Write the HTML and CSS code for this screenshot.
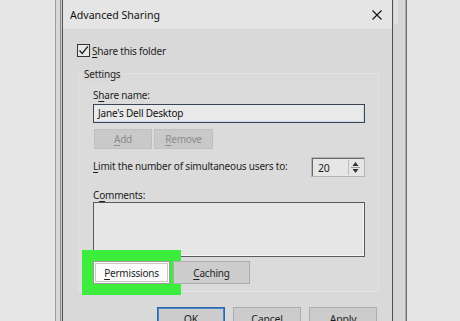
FILE: index.html
```
<!DOCTYPE html>
<html>
<head>
<meta charset="utf-8">
<link rel="stylesheet" href="styles.css">
</head>
<body>
<div class="screen">
  <div class="desk-left"></div>
  <div class="frame-left"></div>
  <div class="dialog">
    <div class="titlebar">
      <span class="title">Advanced Sharing</span>
      <svg class="close" width="10" height="10" viewBox="0 0 10 10"><path d="M0.5 0.5 L9.5 9.5 M9.5 0.5 L0.5 9.5" stroke="#111" stroke-width="1.1" fill="none"/></svg>
    </div>
    <div class="body">
      <div class="check-row">
        <span class="checkbox"><svg width="11" height="11" viewBox="0 0 11 11"><path d="M1.5 5.5 L4.2 8.5 L9.8 1.5" stroke="#222" stroke-width="1.3" fill="none"/></svg></span>
        <span class="label"><u>S</u>hare this folder</span>
      </div>
      <div class="group">
        <div class="group-title">Settings</div>
        <div class="label share-label">S<u>h</u>are name:</div>
        <div class="textbox name-box">Jane's Dell Desktop</div>
        <div class="btn-row">
          <span class="btn disabled add"><u>A</u>dd</span>
          <span class="btn disabled remove"><u>R</u>emove</span>
        </div>
        <div class="limit-row">
          <span class="label"><u>L</u>imit the number of simultaneous users to:</span>
          <span class="spinner">
            <span class="spin-value">20</span>
            <span class="spin-arrows">
              <svg width="11" height="15" viewBox="0 0 11 15"><path d="M5.5 2 L8.5 6 L2.5 6 Z" fill="#333"/><path d="M1 7.5 H10" stroke="#9a9a9a" stroke-width="1"/><path d="M2.5 9 L8.5 9 L5.5 13 Z" fill="#333"/></svg>
            </span>
          </span>
        </div>
        <div class="label comments-label">C<u>o</u>mments:</div>
        <div class="textbox comments-box"></div>
        <div class="btn-row perm-row">
          <span class="btn permissions"><u>P</u>ermissions</span>
          <span class="btn caching"><u>C</u>aching</span>
        </div>
      </div>
      <div class="footer">
        <span class="btn ok">OK</span>
        <span class="btn cancel">Cancel</span>
        <span class="btn apply">Apply</span>
      </div>
    </div>
  </div>
  <div class="frame-right">
    <div class="thumb"></div>
  </div>
  <div class="desk-right"></div>
</div>
</body>
</html>
```
FILE: styles.css
```
html, body {
  margin: 0;
  padding: 0;
  background: #e5e5e5;
  overflow: hidden;
}
.screen {
  display: flex;
  width: 460px;
  height: 321px;
  overflow: hidden;
  font-family: "Noto Sans", "DejaVu Sans", sans-serif;
  font-size: 10px;
  letter-spacing: -0.2px;
  color: #1e1e1e;
}
.desk-left {
  width: 55px;
  flex: none;
  background: #e6e6e6;
  border-right: 1px solid #9c9c9c;
}
.frame-left {
  width: 4px;
  flex: none;
  background: #d8d8d8;
}
.dialog {
  flex: none;
  width: 329px;
  border-left: 1px solid #8a8a8a;
  border-right: 1px solid #4d4d4d;
  box-shadow: inset 1px 0 0 #cfcfcf, inset 2px 0 0 #505050;
  padding-left: 2px;
  background: #d9d9d9;
  display: flex;
  flex-direction: column;
}
.titlebar {
  height: 29px;
  background: #e5e5e5;
  display: flex;
  align-items: center;
  justify-content: space-between;
  padding: 0 10px 0 7px;
  flex: none;
}
.title {
  font-size: 10.6px;
  letter-spacing: 0;
  color: #111;
  margin-top: 1px;
}
.close {
  display: block;
}
.body {
  padding: 15px 15px 0 14px;
  display: flex;
  flex-direction: column;
}
.check-row {
  display: flex;
  align-items: center;
  gap: 2px;
  height: 13px;
}
.checkbox {
  width: 11px;
  height: 11px;
  border: 1px solid #333;
  background: #e8e8e8;
  display: flex;
  align-items: center;
  justify-content: center;
}
.checkbox svg {
  display: block;
}
.label {
  line-height: 16px;
  white-space: nowrap;
}
.label u, .btn u {
  text-decoration-thickness: 1px;
  text-underline-offset: 2px;
}
.group {
  margin-top: 16px;
  margin-left: 1px;
  width: 272px;
  border: 1px solid #e2e2e2;
  background: #dbdbdb;
  padding: 0 13px 7px 14px;
  display: flex;
  flex-direction: column;
  align-items: flex-start;
}
.group-title {
  line-height: 16px;
  margin-top: -8px;
  margin-left: -11px;
  padding: 0 2px;
  background: #d9d9d9;
}
.share-label {
  margin-top: 5px;
}
.textbox {
  box-sizing: border-box;
  width: 272px;
  background: #e9e9e9;
}
.name-box {
  margin-top: 1px;
  height: 19px;
  border: 1px solid #3a4656;
  box-shadow: inset -1px -1px 0 #c9d8ea;
  line-height: 17px;
  padding-left: 4px;
  color: #111;
}
.btn-row {
  display: flex;
  gap: 2px;
  margin-top: 6px;
}
.btn {
  box-sizing: border-box;
  display: flex;
  align-items: center;
  justify-content: center;
  white-space: nowrap;
  background: #cdcdcd;
  border: 1px solid #adadad;
  color: #1e1e1e;
}
.disabled {
  height: 20px;
  background: #c9c9c9;
  border-color: #bfbfbf;
  color: #8c8c8c;
}
.add {
  width: 58px;
  margin-left: 1px;
}
.remove {
  width: 59px;
}
.limit-row {
  margin-top: 8px;
  width: 272px;
  display: flex;
  align-items: center;
  justify-content: space-between;
}
.limit-row .label {
  margin-top: -3px;
}
.spinner {
  box-sizing: border-box;
  width: 54px;
  height: 20px;
  border: 1px solid #b4b4b4;
  box-shadow: inset 1px 1px 0 #6a6a6a;
  background: #e6e6e6;
  display: flex;
  align-items: center;
  justify-content: space-between;
  padding: 0 3px 0 6px;
  font-size: 10.5px;
}
.spin-value {
  line-height: 16px;
  margin-top: 1px;
}
.spin-arrows {
  display: flex;
  border-left: 1px solid #bdbdbd;
  padding-left: 1px;
}
.spin-arrows svg {
  display: block;
}
.comments-label {
  margin-top: 11px;
  line-height: 14px;
}
.comments-box {
  height: 55px;
  border: 1px solid #5a5a5a;
  box-shadow: inset -1px -1px 0 #f4f4f4;
  background: #e6e6e6;
}
.perm-row {
  margin-top: 4px;
  gap: 3px;
}
.permissions {
  width: 77px;
  height: 23px;
  background: #fbfbfb;
  border: 1px solid #9a9a9a;
  box-shadow: inset 0 0 0 1px #fdfdfd, inset 0 0 0 2px #c8c8c8;
  outline: 11px solid #3ded3d;
  outline-offset: 0;
}
.caching {
  width: 77px;
  height: 23px;
}
.footer {
  margin-top: 15px;
  display: flex;
  justify-content: flex-end;
  gap: 8px;
}
.footer .btn {
  width: 68px;
  height: 23px;
  background: #cccccc;
  padding-top: 1px;
  font-size: 10.5px;
}
.ok {
  border: 1px solid #2c66a8;
  box-shadow: inset 0 0 0 1px #4a88c8;
}
.frame-right {
  flex: none;
  width: 12px;
  background: #d6d6d6;
  border-right: 1px solid #6e6e6e;
  box-shadow: inset -1px 0 0 #aaaaaa;
  padding-left: 1px;
}
.thumb {
  width: 4px;
  height: 24px;
  background: #e0e0e0;
}
.desk-right {
  flex: 1;
  background: #e4e4e4;
}
```
